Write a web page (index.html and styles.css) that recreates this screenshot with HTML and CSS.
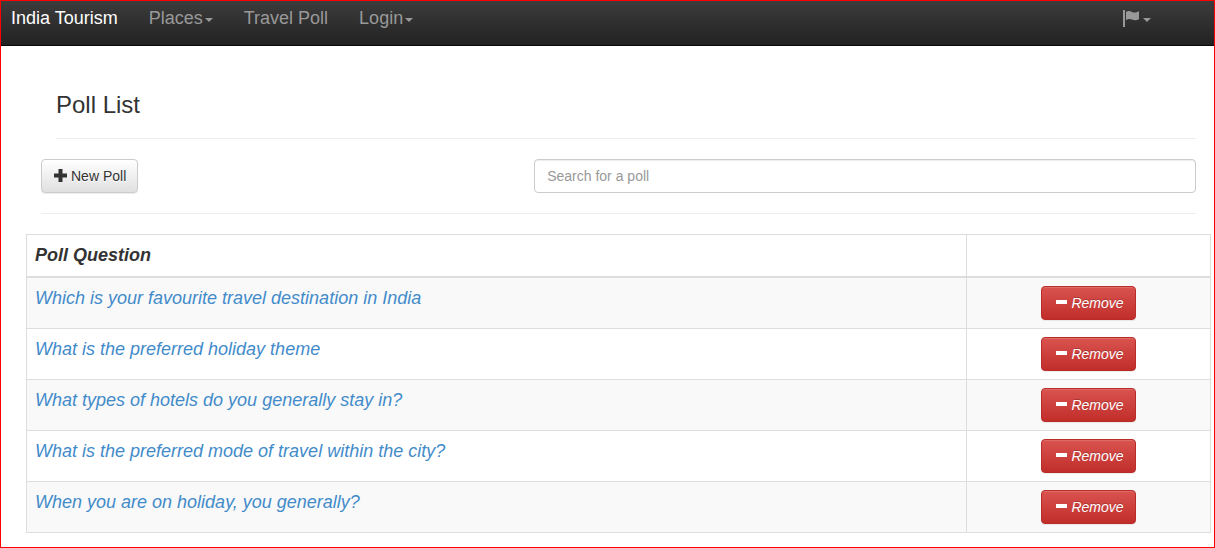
FILE: index.html
```html
<!DOCTYPE html>
<html lang="en">
<head>
<meta charset="utf-8">
<title>India Tourism - Poll List</title>
<link rel="stylesheet" href="styles.css">
</head>
<body>
<nav class="navbar">
  <a class="brand" href="#">India Tourism</a>
  <a class="nav-link" href="#">Places<span class="caret"></span></a>
  <a class="nav-link" href="#">Travel Poll</a>
  <a class="nav-link" href="#">Login<span class="caret"></span></a>
  <a class="nav-link nav-flag" href="#" aria-label="Language">
    <svg class="flag" viewBox="0 0 18 18" aria-hidden="true"><path d="M0 1h2v17H0z"/><path d="M3 3c2-1.500 4-1.300 6 0 2 1 4 .8 7-.8v8c-3 1.500-5 1.200-7 .4-2-.8-4-1-6 .6z"/></svg><span class="caret"></span>
  </a>
</nav>
<main class="page">
  <h1 class="title">Poll List</h1>
  <div class="toolbar">
    <div class="toolbar-action">
      <button class="btn btn-default" type="button"><svg class="icon" viewBox="0 0 14 14" aria-hidden="true"><path d="M5.500 0h4v4.500H14v4H9.500V13h-4V8.500H1v-4h4.500z"/></svg>New Poll</button>
    </div>
    <input class="search" type="text" placeholder="Search for a poll" aria-label="Search for a poll">
  </div>
  <table class="polls">
    <colgroup><col class="col-question"><col></colgroup>
    <thead>
      <tr><th scope="col">Poll Question</th><th></th></tr>
    </thead>
    <tbody>
      <tr><td><a href="#">Which is your favourite travel destination in India</a></td><td class="action"><button class="btn btn-danger" type="button"><svg class="icon" viewBox="0 0 14 14" aria-hidden="true"><path d="M3 4h11v4H3z"/></svg>Remove</button></td></tr>
      <tr><td><a href="#">What is the preferred holiday theme</a></td><td class="action"><button class="btn btn-danger" type="button"><svg class="icon" viewBox="0 0 14 14" aria-hidden="true"><path d="M3 4h11v4H3z"/></svg>Remove</button></td></tr>
      <tr><td><a href="#">What types of hotels do you generally stay in?</a></td><td class="action"><button class="btn btn-danger" type="button"><svg class="icon" viewBox="0 0 14 14" aria-hidden="true"><path d="M3 4h11v4H3z"/></svg>Remove</button></td></tr>
      <tr><td><a href="#">What is the preferred mode of travel within the city?</a></td><td class="action"><button class="btn btn-danger" type="button"><svg class="icon" viewBox="0 0 14 14" aria-hidden="true"><path d="M3 4h11v4H3z"/></svg>Remove</button></td></tr>
      <tr><td><a href="#">When you are on holiday, you generally?</a></td><td class="action"><button class="btn btn-danger" type="button"><svg class="icon" viewBox="0 0 14 14" aria-hidden="true"><path d="M3 4h11v4H3z"/></svg>Remove</button></td></tr>
    </tbody>
  </table>
</main>
</body>
</html>
```
FILE: styles.css
```css
* {
  box-sizing: border-box;
}

body {
  margin: 0;
  min-height: 100vh;
  border: 1px solid #f00;
  background: #fff;
  color: #333;
  font-family: "Liberation Sans", Arial, sans-serif;
  font-size: 18px;
  line-height: 25px;
}

a {
  color: #428bca;
  text-decoration: none;
}

.navbar {
  display: flex;
  align-items: flex-start;
  gap: 31px;
  padding: 5px 63px 14px 10px;
  border-bottom: 1px solid #080808;
  background: linear-gradient(#3c3c3c, #222);
}

.brand {
  color: #fff;
}

.nav-link {
  display: flex;
  align-items: center;
  color: #999;
}

.nav-flag {
  margin-left: auto;
  padding-top: 3px;
}

.caret {
  margin-top: 2px;
  margin-left: 2px;
  border: 4px solid transparent;
  border-top-color: currentColor;
  border-bottom-width: 0;
}

.nav-flag .caret {
  margin-top: 4px;
}

.flag {
  width: 18px;
  height: 18px;
  fill: currentColor;
}

.page {
  padding: 44px 3px 14px 25px;
}

.title {
  margin: 0 15px 20px 30px;
  padding-bottom: 18px;
  border-bottom: 1px solid #eee;
  font-size: 24px;
  font-weight: 400;
  line-height: 30px;
}

.toolbar {
  display: flex;
  margin: 0 15px 20px;
  padding-bottom: 20px;
  border-bottom: 1px solid #eee;
}

.toolbar-action {
  flex: 1;
}

.search {
  width: 57.3%;
  height: 34px;
  padding: 6px 12px;
  border: 1px solid #ccc;
  border-radius: 4px;
  background: #fff;
  box-shadow: inset 0 1px 1px rgba(0, 0, 0, 0.075);
  color: #555;
  font: 14px/20px "Liberation Sans", Arial, sans-serif;
}

.search::placeholder {
  color: #999;
  opacity: 1;
}

.btn {
  display: inline-flex;
  align-items: center;
  height: 34px;
  padding: 6px 11px;
  border: 1px solid;
  border-radius: 4px;
  box-shadow: inset 0 1px 0 rgba(255, 255, 255, 0.15), 0 1px 1px rgba(0, 0, 0, 0.075);
  font: 14px/20px "Liberation Sans", Arial, sans-serif;
  cursor: pointer;
}

.icon {
  width: 14px;
  height: 14px;
  margin-right: 4px;
  fill: currentColor;
}

.btn-default {
  border-color: #ccc;
  background: linear-gradient(#fff, #e0e0e0);
  color: #333;
  text-shadow: 0 1px 0 #fff;
}

.btn-danger {
  border-color: #b92c28;
  background: linear-gradient(#d9534f, #c12e2a);
  color: #fff;
  font-style: italic;
  text-shadow: 0 -1px 0 rgba(0, 0, 0, 0.2);
}

.polls {
  width: 100%;
  border-collapse: collapse;
  table-layout: fixed;
  font-style: italic;
}

.col-question {
  width: 79.4%;
}

.polls th,
.polls td {
  padding: 8px;
  border: 1px solid #ddd;
  text-align: left;
  vertical-align: top;
}

.polls th {
  border-bottom-width: 2px;
}

.polls tbody tr:nth-child(odd) {
  background: #f9f9f9;
}

.polls .action {
  text-align: center;
}

.action .btn {
  vertical-align: top;
}
```
